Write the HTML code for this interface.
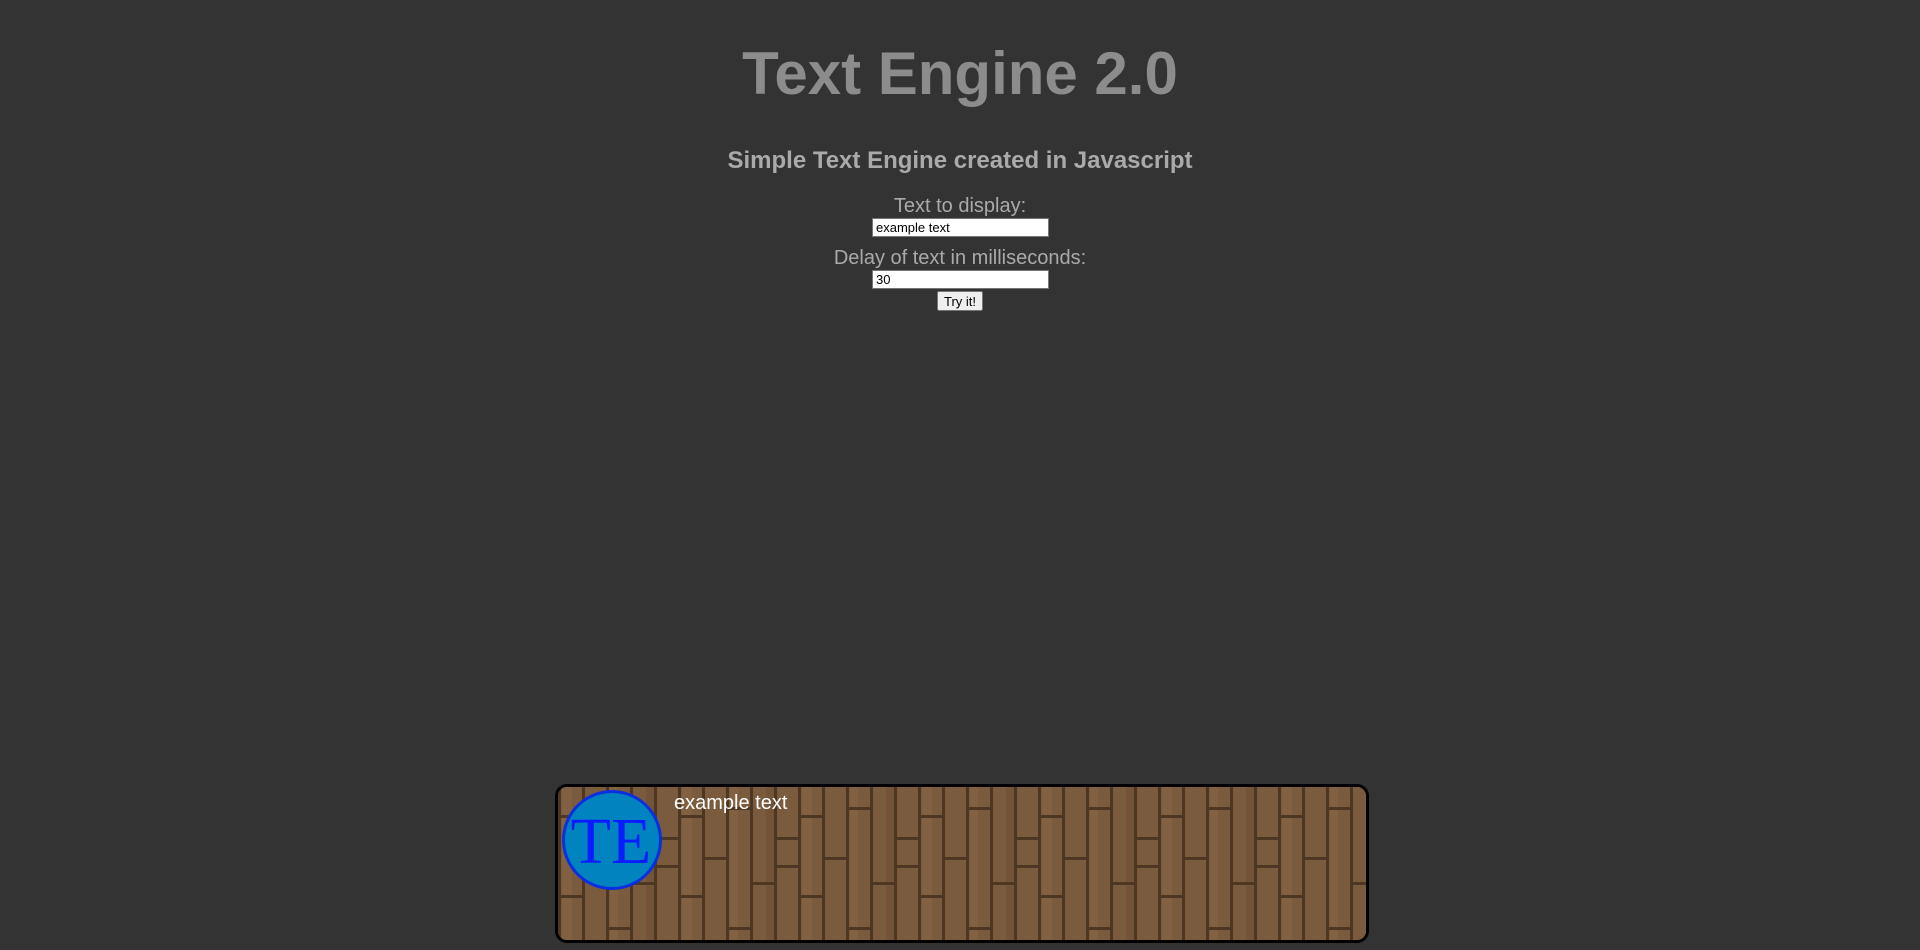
<!DOCTYPE html>
<html><head><style>
html,body{margin:0;padding:0;background:#333;width:1920px;height:950px;overflow:hidden;font-family:"Liberation Sans",Arial,sans-serif;}
h1{position:absolute;left:0;width:1920px;top:39px;margin:0;text-align:center;font-size:60px;font-weight:bold;color:#8c8c8c;line-height:70px;}
h3{position:absolute;left:0;width:1920px;top:147px;margin:0;text-align:center;font-size:24px;font-weight:bold;color:#aaa;line-height:28px;}
.lbl{position:absolute;left:0;width:1920px;text-align:center;font-size:20px;color:#aaa;line-height:22px;}
.inp{position:absolute;left:872px;width:172px;height:17px;background:#fff;border:1px solid #767676;font-size:13px;line-height:18px;padding-left:3px;color:#000;}
.btn{position:absolute;left:937px;top:291px;width:44px;height:18px;background:#efefef;border:1px solid #767676;font-size:13px;line-height:19px;text-align:center;color:#000;border-radius:2px;}
.box{position:absolute;left:555px;top:784px;width:808px;height:153px;border:3px solid #000;border-radius:12px;overflow:hidden;background:#7a5a3c;}
.box svg{position:absolute;left:0;top:0;}
.circ{position:absolute;left:4px;top:3px;width:100px;height:100px;border-radius:50%;background:#0083bf;border:3px solid #0a2fe0;box-sizing:border-box;}
.circ span{position:absolute;left:-4px;width:100px;top:18px;text-align:center;font-family:"Liberation Serif",serif;font-size:66px;line-height:62px;color:#0a1cff;}
.msg{position:absolute;left:116px;top:5px;font-size:20px;color:#fff;}
</style></head><body>
<h1>Text Engine 2.0</h1>
<h3>Simple Text Engine created in Javascript</h3>
<div class="lbl" style="top:195px">Text to display:</div>
<div class="inp" style="top:218px">example text</div>
<div class="lbl" style="top:247px">Delay of text in milliseconds:</div>
<div class="inp" style="top:270px">30</div>
<div class="btn">Try it!</div>
<div class="box">
<svg width="808" height="153">
<defs><pattern id="w" width="120" height="160" patternUnits="userSpaceOnUse">
<rect width="120" height="160" fill="#7b5b3d"/>
<rect x="4" width="10" height="160" fill="#876548" opacity=".6"/>
<rect x="52" width="8" height="160" fill="#876548" opacity=".6"/>
<rect x="88" width="10" height="160" fill="#6e5035" opacity=".6"/>
<rect x="0" width="3" height="160" fill="#4e3722"/>
<rect x="24" width="3" height="160" fill="#4e3722"/>
<rect x="48" width="3" height="160" fill="#4e3722"/>
<rect x="72" width="3" height="160" fill="#4e3722"/>
<rect x="96" width="3" height="160" fill="#4e3722"/>
<rect x="0" y="28" width="24" height="3" fill="#4e3722"/>
<rect x="0" y="108" width="24" height="3" fill="#4e3722"/>
<rect x="24" y="70" width="24" height="3" fill="#4e3722"/>
<rect x="48" y="20" width="24" height="3" fill="#4e3722"/>
<rect x="48" y="140" width="24" height="3" fill="#4e3722"/>
<rect x="72" y="95" width="24" height="3" fill="#4e3722"/>
<rect x="96" y="50" width="24" height="3" fill="#4e3722"/>
<rect x="96" y="78" width="24" height="3" fill="#4e3722"/>
</pattern></defs>
<rect width="808" height="153" fill="url(#w)"/>
</svg>
<div class="circ"><span>TE</span></div><div class="msg">example text</div></div>
</body></html>
